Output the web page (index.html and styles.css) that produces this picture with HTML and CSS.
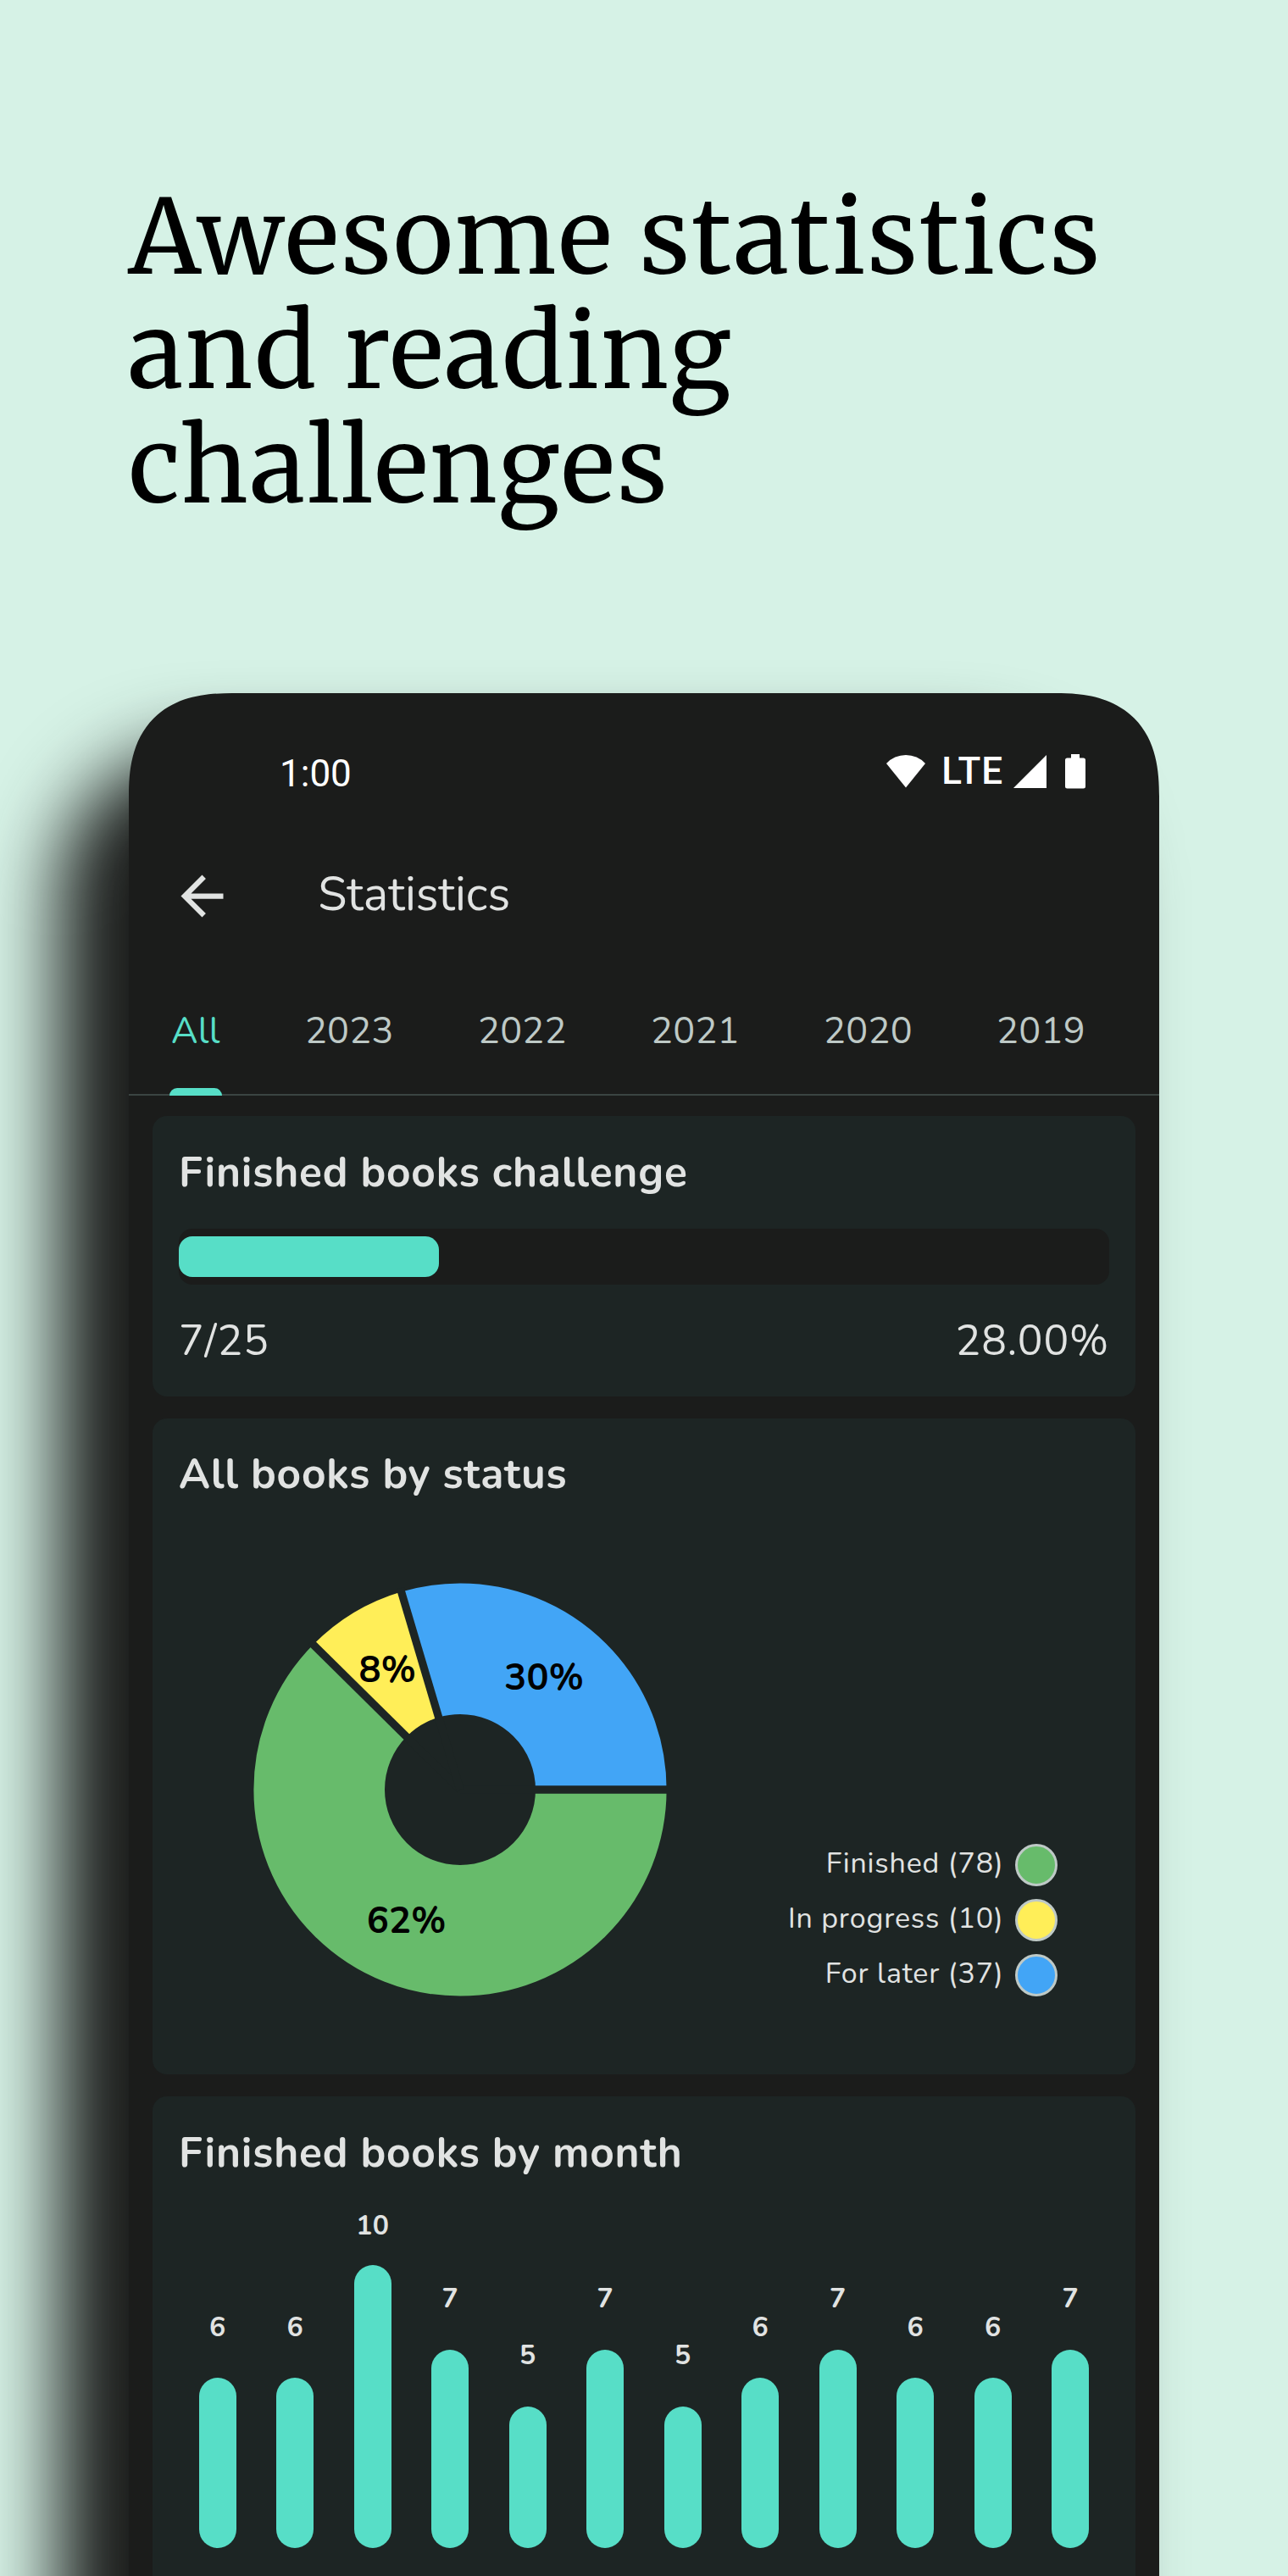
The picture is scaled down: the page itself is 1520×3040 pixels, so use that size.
FILE: index.html
```
<!DOCTYPE html>
<html lang="en">
<head>
  <meta charset="utf-8">
  <title>Statistics</title>
  <link rel="stylesheet" href="styles.css">
</head>
<body>
  <main class="page">
    <header class="hero">
      <h1 class="hero-title">Awesome statistics<br>and reading<br>challenges</h1>
    </header>

    <section class="phone">
      <div class="status-bar">
        <span class="clock">1:00</span>
        <div class="status-icons">
          <svg class="wifi" width="46" height="39" viewBox="0 0 46 39"><path d="M0 10A31.5 31.5 0 0 1 46 10L23 38.6Z" fill="#fff"/></svg>
          <span class="network">LTE</span>
          <svg class="signal" width="39" height="39" viewBox="0 0 39 39"><path d="M39 0V39H0Z" fill="#fff"/></svg>
          <svg class="battery" width="24" height="41" viewBox="0 0 24 41"><path d="M7 0H17V4.5H21.5A2.5 2.5 0 0 1 24 7V38A2.5 2.5 0 0 1 21.5 40.5H2.5A2.5 2.5 0 0 1 0 38V7A2.5 2.5 0 0 1 2.5 4.5H7Z" fill="#fff"/></svg>
        </div>
      </div>

      <div class="app-bar">
        <svg class="back" width="75" height="75" viewBox="0 0 24 24"><path d="M20 11H7.83l5.590-5.590L12 4l-8 8 8 8 1.410-1.410L7.830 13H20v-2z" fill="#e1e3e2"/></svg>
        <h2 class="app-title">Statistics</h2>
      </div>

      <nav class="tabs">
        <span class="tab tab-active">All</span>
        <span class="tab">2023</span>
        <span class="tab">2022</span>
        <span class="tab">2021</span>
        <span class="tab">2020</span>
        <span class="tab">2019</span>
      </nav>

      <div class="content">
        <article class="card challenge">
          <h3 class="card-title">Finished books challenge</h3>
          <div class="progress"><div class="progress-fill" style="width: 28%"></div></div>
          <div class="progress-values"><span>7/25</span><span>28.00%</span></div>
        </article>

        <article class="card by-status">
          <h3 class="card-title">All books by status</h3>
          <div class="status-chart">
            <svg class="donut" width="488" height="488" viewBox="0 0 488 488">
              <g fill="none" stroke-width="154.6">
                <circle cx="244" cy="244" r="166.3" pathLength="1000" stroke="#67bb6b" stroke-dasharray="624 1000"/>
                <circle cx="244" cy="244" r="166.3" pathLength="1000" stroke="#ffee58" stroke-dasharray="80 1000" stroke-dashoffset="-624"/>
                <circle cx="244" cy="244" r="166.3" pathLength="1000" stroke="#42a5f6" stroke-dasharray="296 1000" stroke-dashoffset="-704"/>
              </g>
              <g stroke="#1d2524" stroke-width="9.3">
                <path d="M244 244H492"/>
                <path d="M244 244H492" transform="rotate(224.64 244 244)"/>
                <path d="M244 244H492" transform="rotate(253.44 244 244)"/>
              </g>
              <g class="donut-labels" text-anchor="middle">
                <text x="343.2" y="125.8">30%</text>
                <text x="158.2" y="116.7">8%</text>
                <text x="180.7" y="412.9">62%</text>
              </g>
            </svg>
            <ul class="legend">
              <li class="legend-item"><span class="legend-text">Finished (78)</span><i class="dot dot-green"></i></li>
              <li class="legend-item"><span class="legend-text">In progress (10)</span><i class="dot dot-yellow"></i></li>
              <li class="legend-item"><span class="legend-text">For later (37)</span><i class="dot dot-blue"></i></li>
            </ul>
          </div>
        </article>

        <article class="card by-month">
          <h3 class="card-title">Finished books by month</h3>
          <div class="bars">
            <div class="month"><span class="count">6</span><div class="bar" style="height: 200.2px"></div></div>
            <div class="month"><span class="count">6</span><div class="bar" style="height: 200.2px"></div></div>
            <div class="month month-max"><span class="count">10</span><div class="bar" style="height: 333.4px"></div></div>
            <div class="month"><span class="count">7</span><div class="bar" style="height: 233.6px"></div></div>
            <div class="month"><span class="count">5</span><div class="bar" style="height: 166.8px"></div></div>
            <div class="month"><span class="count">7</span><div class="bar" style="height: 233.6px"></div></div>
            <div class="month"><span class="count">5</span><div class="bar" style="height: 166.8px"></div></div>
            <div class="month"><span class="count">6</span><div class="bar" style="height: 200.2px"></div></div>
            <div class="month"><span class="count">7</span><div class="bar" style="height: 233.6px"></div></div>
            <div class="month"><span class="count">6</span><div class="bar" style="height: 200.2px"></div></div>
            <div class="month"><span class="count">6</span><div class="bar" style="height: 200.2px"></div></div>
            <div class="month"><span class="count">7</span><div class="bar" style="height: 233.6px"></div></div>
          </div>
        </article>
      </div>
    </section>
  </main>
</body>
</html>
```
FILE: styles.css
```
* {
  box-sizing: border-box;
}

body {
  margin: 0;
  background: #d6f2e6;
  font-family: Nunito, Lato, "Open Sans", sans-serif;
  color: #e1e3e2;
}

h1, h2, h3, ul {
  margin: 0;
  padding: 0;
}

svg {
  display: block;
  flex: none;
}

.page {
  position: relative;
  z-index: 0;
  width: 1520px;
  height: 3040px;
  overflow: hidden;
  display: flex;
  flex-direction: column;
}

.hero {
  flex: none;
  height: 817.6px;
  padding: 213px 0 0 151.5px;
}

.hero-title {
  font: 400 121.2px/135px Merriweather, "DejaVu Serif Condensed", "DejaVu Serif", serif;
  letter-spacing: 1.95px;
  color: #000;
  white-space: nowrap;
}

.phone {
  position: relative;
  flex: none;
  width: 1216px;
  height: 2400px;
  margin-left: 152px;
  background: #1b1c1b;
  border-radius: 106px;
}

/* Soft drop shadow, cast down and to the left */
.phone::before {
  content: "";
  position: absolute;
  z-index: -1;
  inset: 69px 69px -80px -83px;
  border-radius: 165px;
  background: #1b1c1b;
  filter: blur(45px);
}

@supports (corner-shape: superellipse(1.32)) {
  .phone {
    border-radius: 122px;
    corner-shape: superellipse(1.32);
  }
}

/* Status bar */
.status-bar {
  height: 190px;
  padding: 0 87px 0 178px;
  display: flex;
  align-items: center;
  justify-content: space-between;
  font-family: Roboto, sans-serif;
  color: #fff;
}

.clock {
  font-size: 44px;
  line-height: 52px;
}

.status-icons {
  display: flex;
  align-items: center;
  margin-bottom: 5px;
}

.network {
  margin: 0 11.5px 0 19px;
  font-size: 44px;
  line-height: 40px;
  font-weight: 500;
  letter-spacing: 1px;
}

.battery {
  margin-left: 22.3px;
}

/* App bar */
.app-bar {
  height: 99.6px;
  padding-left: 49px;
  display: flex;
  align-items: center;
  gap: 99.3px;
}

.app-title {
  margin-bottom: 3px;
  font-size: 55.5px;
  line-height: 76px;
  font-weight: 400;
}

/* Tabs */
.tabs {
  height: 186px;
  padding: 80px 0 0 49.2px;
  border-bottom: 2px solid #3b4442;
  display: flex;
  gap: 99.2px;
}

.tab {
  font-size: 43.2px;
  line-height: 60px;
  letter-spacing: 0.3px;
  color: #bec9c6;
}

.tab-active {
  position: relative;
  min-width: 59.5px;
  text-align: center;
  color: #57dec7;
}

.tab-active::after {
  content: "";
  position: absolute;
  left: -1.3px;
  bottom: -46px;
  width: 62px;
  height: 9px;
  border-radius: 9px 9px 0 0;
  background: #57dec7;
}

.tabs .tab-active {
  height: 60px;
}

/* Cards */
.content {
  display: flex;
  flex-direction: column;
  gap: 25.6px;
  padding: 24px 28px 0 28.3px;
}

.card {
  flex: none;
  padding: 36.7px 31px 0 30.7px;
  border-radius: 17px;
  background: #1d2524;
}

.card-title {
  font-size: 49.6px;
  line-height: 60px;
  font-weight: 700;
  letter-spacing: 0.78px;
}

.challenge {
  height: 331px;
}

.progress {
  height: 65.5px;
  margin-top: 36.3px;
  padding: 9px 0;
  border-radius: 16px;
  background: #1b1c1b;
}

.progress-fill {
  height: 100%;
  border-radius: 16px;
  background: #57dec7;
}

.progress-values {
  display: flex;
  justify-content: space-between;
  margin-top: 37px;
  font-size: 49.6px;
  line-height: 60px;
  letter-spacing: 0.83px;
}

.by-status {
  height: 774.5px;
}

.status-chart {
  display: flex;
  justify-content: space-between;
  align-items: flex-end;
  margin-top: 97.3px;
  padding: 0 61px 0 88.5px;
}

.donut-labels {
  font-size: 43.4px;
  font-weight: 700;
  letter-spacing: 0.3px;
  fill: #000;
}

.legend {
  display: flex;
  flex-direction: column;
  gap: 15.1px;
  list-style: none;
}

.legend-item {
  display: flex;
  justify-content: flex-end;
  align-items: center;
  gap: 13.5px;
  height: 50px;
}

.legend-text {
  margin-bottom: 4px;
  font-size: 34px;
  line-height: 46px;
  letter-spacing: 0.83px;
}

.dot {
  width: 50px;
  height: 50px;
  border: 3px solid #bec9c6;
  border-radius: 50%;
}

.dot-green {
  background: #67bb6b;
}

.dot-yellow {
  background: #ffee58;
}

.dot-blue {
  background: #42a5f6;
}

.by-month {
  height: 900px;
}

.bars {
  display: flex;
  justify-content: space-between;
  align-items: flex-end;
  height: 436px;
  padding: 0 23.7px;
}

.month {
  width: 44px;
  display: flex;
  flex-direction: column;
  align-items: center;
}

.count {
  margin-bottom: 43.5px;
  font-size: 32px;
  line-height: 32px;
  font-weight: 700;
  letter-spacing: 0.3px;
}

.month-max .count {
  margin-bottom: 30.5px;
}

.bar {
  width: 100%;
  border-radius: 22px;
  background: #57dec7;
}
```
